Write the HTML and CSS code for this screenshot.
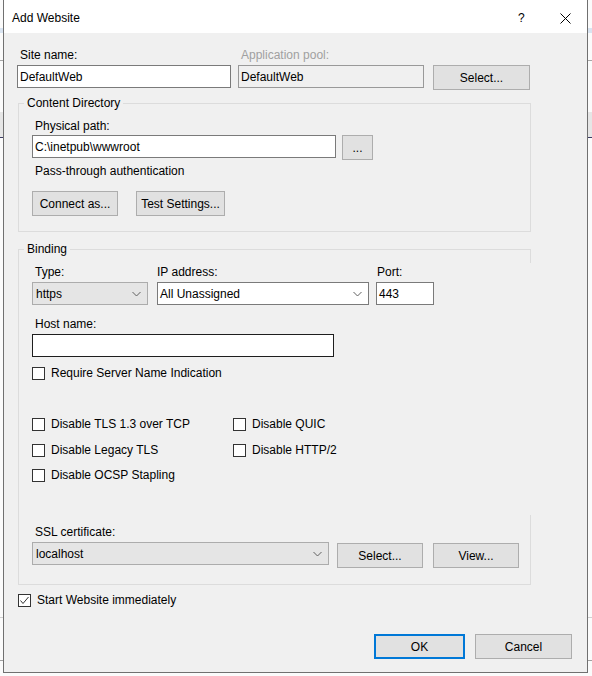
FILE: index.html
```html
<!DOCTYPE html>
<html>
<head>
<meta charset="utf-8">
<link rel="stylesheet" href="styles.css">
</head>
<body>
<div class="dialog">
  <div class="titlebar">
    <span class="title">Add Website</span>
    <span class="help">?</span>
    <span class="close"><svg width="11" height="11" viewBox="0 0 11 11"><path d="M0.5 0.5 L10.5 10.5 M10.5 0.5 L0.5 10.5" stroke="#000" stroke-width="1" fill="none"/></svg></span>
  </div>
  <div class="body">
    <div class="row1">
      <div class="f-site">
        <span class="lbl">Site name:</span>
        <div class="input">DefaultWeb</div>
      </div>
      <div class="f-pool">
        <span class="lbl lbl-dis">Application pool:</span>
        <div class="input input-dis">DefaultWeb</div>
      </div>
      <div class="f-select">
        <div class="btn btn-pool">Select...</div>
      </div>
    </div>

    <fieldset class="group group-content">
      <legend>Content Directory</legend>
      <div class="gbody">
        <span class="lbl">Physical path:</span>
        <div class="pathrow">
          <div class="input input-path">C:\inetpub\wwwroot</div>
          <div class="btn btn-dots">...</div>
        </div>
        <div class="pass">Pass-through authentication</div>
        <div class="btnrow">
          <div class="btn btn-connect">Connect as...</div>
          <div class="btn btn-test">Test Settings...</div>
        </div>
      </div>
    </fieldset>

    <fieldset class="group group-binding">
      <legend>Binding</legend>
      <div class="gbody">
        <div class="bindrow">
          <div class="c-type">
            <span class="lbl">Type:</span>
            <div class="combo combo-list"><span>https</span><svg class="chev" width="9" height="6" viewBox="0 0 9 6"><path d="M0.5 1 L4.5 5 L8.5 1" stroke="#606060" stroke-width="1" fill="none"/></svg></div>
          </div>
          <div class="c-ip">
            <span class="lbl lbl-ip">IP address:</span>
            <div class="combo combo-edit"><span>All Unassigned</span><svg class="chev" width="9" height="6" viewBox="0 0 9 6"><path d="M0.5 1 L4.5 5 L8.5 1" stroke="#606060" stroke-width="1" fill="none"/></svg></div>
          </div>
          <div class="c-port">
            <span class="lbl lbl-port">Port:</span>
            <div class="input">443</div>
          </div>
        </div>
        <span class="lbl lbl-host">Host name:</span>
        <div class="input input-host"></div>
        <div class="check check-sni"><span class="cb"></span><span>Require Server Name Indication</span></div>

        <div class="checks">
          <div class="crow crow1">
            <div class="check"><span class="cb"></span><span>Disable TLS 1.3 over TCP</span></div>
            <div class="check"><span class="cb"></span><span>Disable QUIC</span></div>
          </div>
          <div class="crow crow2">
            <div class="check"><span class="cb"></span><span>Disable Legacy TLS</span></div>
            <div class="check"><span class="cb"></span><span>Disable HTTP/2</span></div>
          </div>
          <div class="crow crow3">
            <div class="check"><span class="cb"></span><span>Disable OCSP Stapling</span></div>
          </div>
        </div>

        <span class="lbl lbl-ssl">SSL certificate:</span>
        <div class="sslrow">
          <div class="combo combo-list combo-ssl"><span>localhost</span><svg class="chev" width="9" height="6" viewBox="0 0 9 6"><path d="M0.5 1 L4.5 5 L8.5 1" stroke="#606060" stroke-width="1" fill="none"/></svg></div>
          <div class="btn btn-ssl-select">Select...</div>
          <div class="btn btn-view">View...</div>
        </div>
      </div>
    </fieldset>
    <div class="cover"></div>

    <div class="check check-start"><span class="cb cb-on"><svg width="11" height="11" viewBox="0 0 11 11"><path d="M1.5 5.5 L4 8.5 L9.5 2" stroke="#333" stroke-width="1" fill="none"/></svg></span><span>Start Website immediately</span></div>

    <div class="footer">
      <div class="btn btn-ok">OK</div>
      <div class="btn btn-cancel">Cancel</div>
    </div>
  </div>
</div>
</body>
</html>
```

FILE: styles.css
```css
* { box-sizing: border-box; }
html, body { margin: 0; padding: 0; }
body {
  width: 592px;
  height: 676px;
  overflow: hidden;
  font: 12px "Liberation Sans", Arial, sans-serif;
  color: #000;
  background:
    linear-gradient(#d9e4f1, #d9e4f1) 0 28px / 100% 5px no-repeat,
    linear-gradient(#a6a6a6, #a6a6a6) 0 60px / 100% 1px no-repeat,
    linear-gradient(#e6e6e6, #e6e6e6) 0 112px / 100% 25px no-repeat,
    linear-gradient(#3c3c64, #3c3c64) 0 137px / 100% 1px no-repeat,
    linear-gradient(#d0d0d0, #d0d0d0) 0 617px / 100% 1px no-repeat,
    linear-gradient(#a0a0a0, #a0a0a0) 0 660px / 100% 1px no-repeat,
    #fbfbfb;
}

.dialog {
  margin-left: 3px;
  width: 585px;
  height: 673px;
  border: 1px solid #707070;
  border-top: 0;
  background: #f0f0f0;
  display: flex;
  flex-direction: column;
}

.titlebar {
  height: 33px;
  flex: none;
  background: #fff;
  display: flex;
  align-items: center;
  padding: 3px 16px 0 8px;
}
.title { flex: 1; line-height: 14px; }
.help { width: 7px; margin-right: 35px; line-height: 14px; font-size: 12px; }
.close { width: 11px; height: 11px; display: flex; }

.body {
  position: relative;
  flex: 1;
  padding-top: 15px;
}

.lbl { display: block; height: 14px; line-height: 14px; padding-left: 3px; margin-bottom: 3px; white-space: nowrap; }
.lbl-dis { color: #a0a0a0; }

.input {
  height: 23px;
  border: 1px solid #7a7a7a;
  background: #fff;
  padding-left: 2px;
  display: flex;
  align-items: center;
  line-height: 14px;
  white-space: nowrap;
}
.input-dis { background: #f0f0f0; border-color: #999; }

.btn {
  height: 25px;
  border: 1px solid #adadad;
  background: #e1e1e1;
  display: flex;
  align-items: center;
  justify-content: center;
  line-height: 14px;
  white-space: nowrap;
}

.row1 { display: flex; padding-left: 13px; }
.f-site { width: 214px; margin-right: 7px; }
.f-pool { width: 186px; margin-right: 9px; }
.f-select { padding-top: 17px; }
.btn-pool { width: 97px; }

.group {
  margin: 6px 0 0 14px;
  width: 513px;
  padding: 0;
  border: 1px solid #dcdcdc;
  min-width: 0;
}
.group legend {
  margin-left: 5px;
  padding: 0 3px;
  line-height: 14px;
  height: 14px;
}
.gbody { padding: 9px 0 15px 13px; }

.group-content .lbl { margin-bottom: 2px; }
.pathrow { display: flex; align-items: flex-start; }
.input-path { width: 304px; margin-right: 6px; }
.btn-dots { width: 31px; }
.pass { margin-top: 4px; padding-left: 3px; line-height: 14px; height: 14px; }
.btnrow { display: flex; margin-top: 13px; gap: 18px; }
.btn-connect { width: 86px; }
.btn-test { width: 89px; }

.group-binding { margin-top: 10px; }
.group-binding .gbody { padding-bottom: 16px; }

.bindrow { display: flex; }
.c-type { width: 116px; margin-right: 9px; }
.c-ip { width: 212px; margin-right: 7px; }
.c-port { width: 58px; }
.lbl-ip { padding-left: 0; }
.lbl-port { padding-left: 1px; }

.combo {
  height: 23px;
  display: flex;
  align-items: center;
  justify-content: space-between;
  padding: 0 6px 0 3px;
  line-height: 14px;
  white-space: nowrap;
}
.combo-list { background: #e5e5e5; border: 1px solid #acacac; }
.combo-edit { background: #fff; border: 1px solid #7a7a7a; padding-left: 2px; }
.chev { flex: none; margin-top: 1px; }

.lbl-host { margin-top: 12px; }
.input-host { width: 302px; border-color: #1e1e1e; }

.check { display: flex; align-items: center; height: 13px; line-height: 13px; white-space: nowrap; }
.cb {
  width: 13px;
  height: 13px;
  border: 1px solid #333;
  background: #fff;
  margin-right: 6px;
  flex: none;
  display: flex;
  align-items: center;
  justify-content: center;
}
.check-sni { margin-top: 10px; }

.checks { margin-top: 38px; }
.crow { display: grid; grid-template-columns: 201px auto; }
.crow2 { margin-top: 13px; }
.crow3 { margin-top: 12px; }

.lbl-ssl { margin-top: 43px; }
.sslrow { display: flex; align-items: flex-start; }
.combo-ssl { width: 297px; margin-right: 8px; }
.btn-ssl-select { width: 86px; margin-top: 1px; margin-right: 10px; }
.btn-view { width: 86px; margin-top: 1px; }

.cover {
  position: absolute;
  left: 526px;
  top: 230px;
  width: 1px;
  height: 252px;
  background: #f0f0f0;
}

.check-start { margin: 9px 0 0 14px; }

.footer {
  display: flex;
  justify-content: flex-end;
  gap: 10px;
  margin-top: 27px;
  padding-right: 15px;
}
.btn-ok { width: 91px; border: 2px solid #0078d7; }
.btn-cancel { width: 97px; }
```
